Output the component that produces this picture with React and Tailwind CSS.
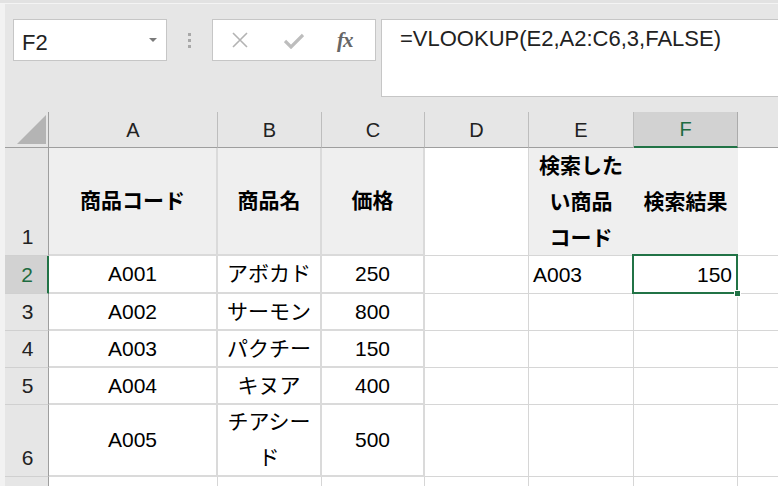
import React from 'react';

const font = "font-['Liberation_Sans','Noto_Sans_CJK_JP',sans-serif]";

function ColHead({ label, active }) {
  return (
    <div
      className={
        'flex items-center justify-center text-[20px] border-r ' +
        (active
          ? 'bg-[#d2d2d2] text-[#1e6b40] border-r-[#ababab] border-b-2 border-b-[#217346]'
          : 'text-[#222] border-r-[#bdbdbd] border-b border-b-[#9e9e9e]')
      }
    >
      {label}
    </div>
  );
}

function RowHead({ n, active }) {
  return (
    <div
      className={
        'flex items-end justify-center pb-[6px] pl-[2px] text-[21px] leading-[24px] border-b border-b-[#d0d0d0] ' +
        (active
          ? 'bg-[#d2d2d2] text-[#1e6b40] border-r-2 border-r-[#217346]'
          : 'bg-[#e6e6e6] text-[#222] border-r border-r-[#9e9e9e]')
      }
    >
      {n}
    </div>
  );
}

function Cell({ thick, fill, align = 'center', bold, wrap, children, className = '' }) {
  const justify =
    align === 'left' ? 'justify-start pl-[4px]' : align === 'right' ? 'justify-end pr-[5px]' : 'justify-center';
  return (
    <div
      className={
        'relative flex items-center text-[21px] text-black ' +
        justify +
        ' ' +
        (thick ? 'border-r-2 border-b-2 border-[#dadada] ' : 'border-r border-b border-[#d6d6d6] ') +
        (fill ? 'bg-[#efefef] ' : 'bg-white ') +
        (bold ? 'font-bold ' : '') +
        (wrap ? 'leading-[36px] text-center ' : 'leading-[24px] ') +
        className
      }
    >
      {children}
    </div>
  );
}

const items = [
  { n: 2, code: 'A001', name: 'アボカド', price: '250' },
  { n: 3, code: 'A002', name: 'サーモン', price: '800' },
  { n: 4, code: 'A003', name: 'パクチー', price: '150' },
  { n: 5, code: 'A004', name: 'キヌア', price: '400' },
];

export default function App() {
  return (
    <div className={'w-[778px] h-[486px] overflow-hidden bg-[#e6e6e6] flex flex-col ' + font}>
      <div className="h-[3px] bg-[#e2e2e2]" />
      <div className="h-px bg-[#f4f4f4]" />
      <div className="flex flex-1 min-h-0">
        <div className="w-[5px] shrink-0 bg-[#f2f2f2]" />
        <div className="flex-1 flex flex-col min-w-0">
          {/* formula bar */}
          <div className="h-[108px] shrink-0 flex items-start pt-[15px] pl-[8px]">
            <div className="w-[154px] h-[42px] shrink-0 bg-white border border-[#c6c6c6] flex items-center justify-between pl-[8px] pr-[9px]">
              <span className="text-[22px] text-[#222] mt-[4px]">F2</span>
              <svg width="8" height="4" viewBox="0 0 8 4">
                <path d="M0 0 L8 0 L4 4 Z" fill="#7a7a7a" />
              </svg>
            </div>
            <div className="w-[4px] h-[42px] ml-[20px] shrink-0 flex flex-col items-center justify-center gap-[3px]">
              <div className="w-[3px] h-[3px] bg-[#a8a8a8]" />
              <div className="w-[3px] h-[3px] bg-[#a8a8a8]" />
              <div className="w-[3px] h-[3px] bg-[#a8a8a8]" />
            </div>
            <div className="w-[164px] h-[42px] ml-[21px] shrink-0 bg-white border border-[#c6c6c6] flex items-center">
              <svg className="ml-[18px]" width="18" height="16" viewBox="0 0 18 16">
                <path d="M2 1 L16 15 M16 1 L2 15" stroke="#b3b3b3" strokeWidth="1.6" />
              </svg>
              <svg className="ml-[35px] mt-[2px]" width="20" height="16" viewBox="0 0 20 16">
                <path d="M1 8 L7 14 L19 2" stroke="#bdbdbd" strokeWidth="3.2" fill="none" />
              </svg>
              <span className="ml-[33px] mt-[1px] text-[21px] italic font-bold text-[#666] font-['Liberation_Serif',serif] tracking-[-1px]">
                fx
              </span>
            </div>
            <div className="flex-1 h-[78px] ml-[5px] bg-white border border-r-0 border-[#c6c6c6] pl-[18px] pt-[6px]">
              <span className="text-[22px] leading-[26px] text-[#222] whitespace-nowrap">=VLOOKUP(E2,A2:C6,3,FALSE)</span>
            </div>
          </div>

          {/* sheet grid */}
          <div className="grid grid-cols-[44px_169px_104px_103px_104px_105px_104px_104px] grid-rows-[36px_108px_38px_37px_37px_37px_72px_40px]">
            <div className="flex items-end justify-end pr-[2px] pb-[3px] border-r border-b border-[#9e9e9e]">
              <svg width="29" height="29" viewBox="0 0 29 29">
                <path d="M29 0 L29 29 L0 29 Z" fill="#b4b4b4" />
              </svg>
            </div>
            {['A', 'B', 'C', 'D', 'E', 'F', ''].map((c, i) => (
              <ColHead key={i} label={c} active={c === 'F'} />
            ))}

            <RowHead n={1} />
            <Cell thick fill bold>商品コード</Cell>
            <Cell thick fill bold>商品名</Cell>
            <Cell thick fill bold>価格</Cell>
            <Cell />
            <Cell fill bold wrap className="border-r-[#efefef]">
              <div>
                検索した
                <br />
                い商品
                <br />
                コード
              </div>
            </Cell>
            <Cell fill bold className="border-r-[#efefef]">検索結果</Cell>
            <Cell />

            {items.map((it) => (
              <React.Fragment key={it.n}>
                <RowHead n={it.n} active={it.n === 2} />
                <Cell thick>{it.code}</Cell>
                <Cell thick>{it.name}</Cell>
                <Cell thick>{it.price}</Cell>
                <Cell />
                <Cell align="left">{it.n === 2 ? 'A003' : ''}</Cell>
                <Cell align="right" className={it.n === 2 ? 'z-10' : ''}>
                  {it.n === 2 && (
                    <>
                      150
                      <div className="absolute -left-[2px] -top-[2px] -right-[1px] -bottom-[1px] border-2 border-[#217346]" />
                      <div className="absolute -right-[4px] -bottom-[4px] w-[7px] h-[7px] bg-[#217346] border border-white" />
                    </>
                  )}
                </Cell>
                <Cell />
              </React.Fragment>
            ))}

            <RowHead n={6} />
            <Cell thick>A005</Cell>
            <Cell thick wrap>
              <div>
                チアシー
                <br />
                ド
              </div>
            </Cell>
            <Cell thick>500</Cell>
            <Cell />
            <Cell />
            <Cell />
            <Cell />

            <RowHead n="" />
            <Cell />
            <Cell />
            <Cell />
            <Cell />
            <Cell />
            <Cell />
            <Cell />
          </div>
        </div>
      </div>
    </div>
  );
}
